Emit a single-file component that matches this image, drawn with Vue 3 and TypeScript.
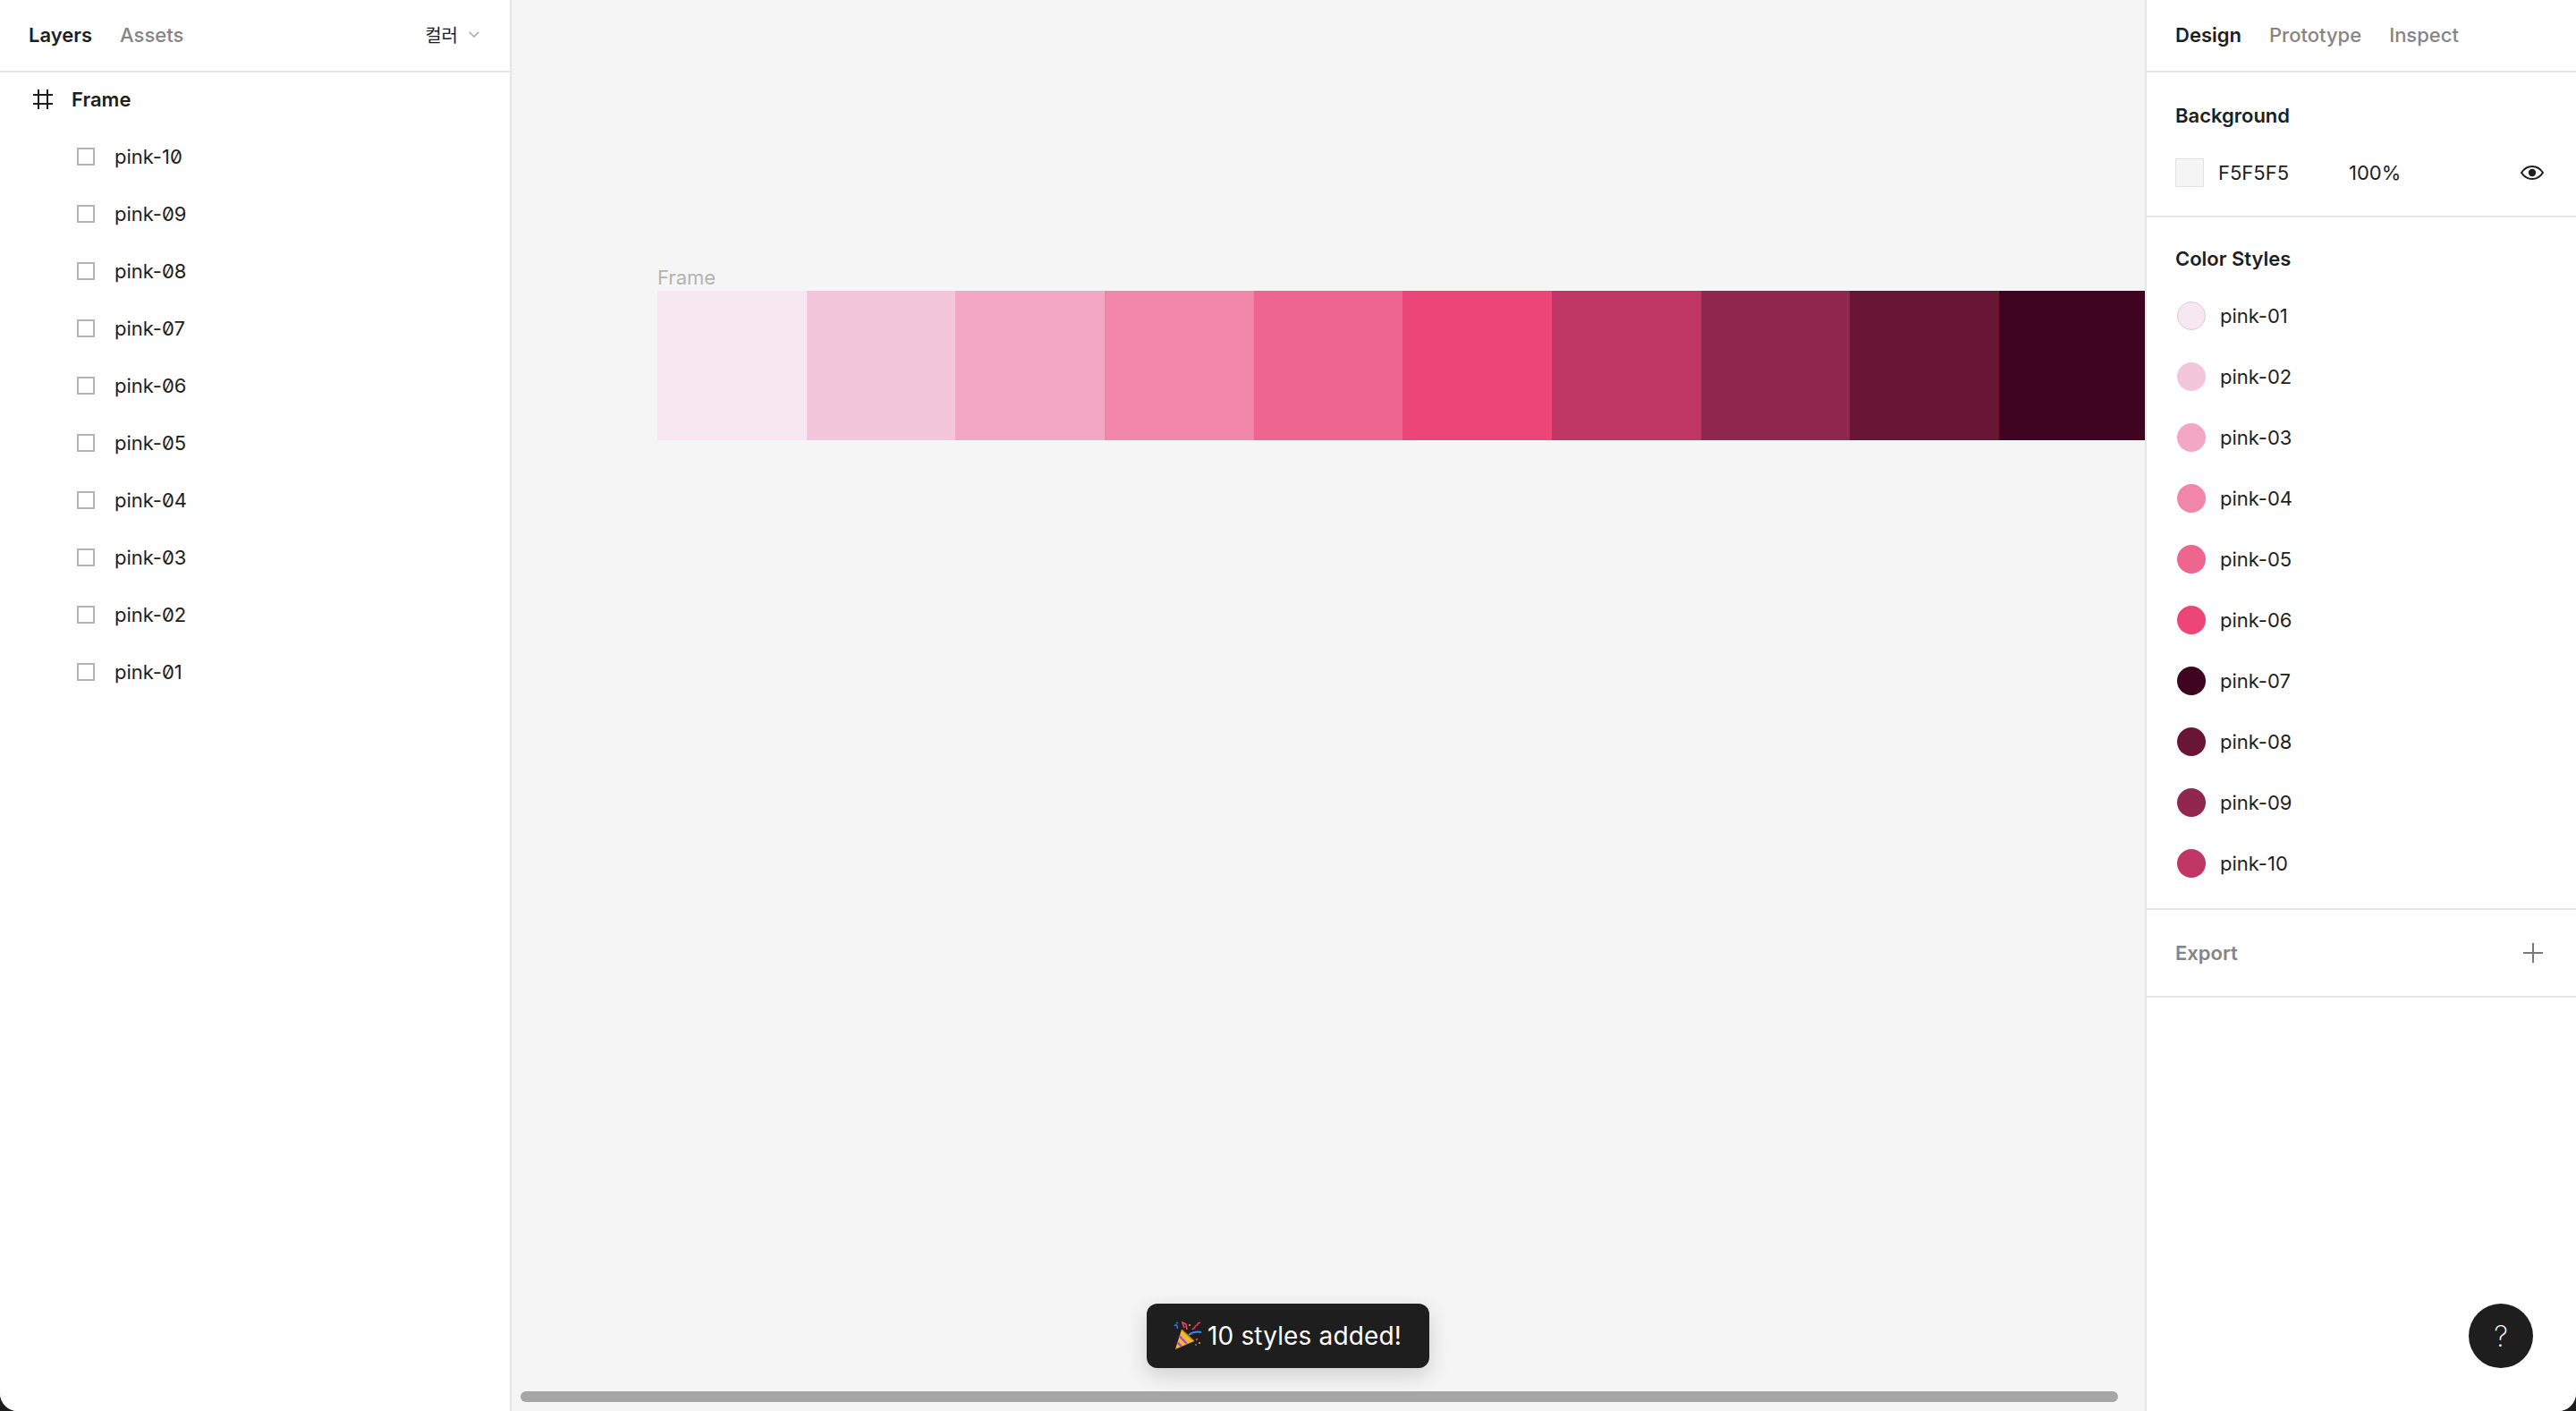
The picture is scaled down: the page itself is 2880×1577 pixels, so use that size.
<script setup lang="ts">
const layers: string[] = ['pink-10','pink-09','pink-08','pink-07','pink-06','pink-05','pink-04','pink-03','pink-02','pink-01']
const swatches: string[] = ['#F6E7F0','#F4C6DB','#F3A7C3','#F186AA','#EE668F','#EC4678','#BF3665','#91264F','#691534','#3F041F']
const styles = [
  { name: 'pink-01', color: '#F6E7F0', edge: true },
  { name: 'pink-02', color: '#F4C6DB', edge: false },
  { name: 'pink-03', color: '#F3A7C3', edge: false },
  { name: 'pink-04', color: '#F186AA', edge: false },
  { name: 'pink-05', color: '#EE668F', edge: false },
  { name: 'pink-06', color: '#EC4678', edge: false },
  { name: 'pink-07', color: '#3F041F', edge: false },
  { name: 'pink-08', color: '#691534', edge: false },
  { name: 'pink-09', color: '#91264F', edge: false },
  { name: 'pink-10', color: '#BF3665', edge: false },
]
</script>

<template>
  <div class="app">
    <aside class="left">
      <header class="tabs">
        <span class="tab on">Layers</span>
        <span class="tab">Assets</span>
        <span class="page">컬러
          <svg class="chev" width="12" height="7" viewBox="0 0 12 7"><path d="M.7.7L6 6l5.300-5.300" fill="none" stroke="#a8a8a8" stroke-width="1.500"/></svg>
        </span>
      </header>
      <div class="frame-row">
        <svg class="hash" width="24" height="24" viewBox="0 0 24 24"><path d="M1 7h22M1 17h22M7 1v22M17 1v22" fill="none" stroke="#1e1e1e" stroke-width="2"/></svg>
        <span>Frame</span>
      </div>
      <div v-for="l in layers" :key="l" class="layer">
        <span class="sq"></span>
        <span class="lname">{{ l }}</span>
      </div>
    </aside>

    <main class="canvas">
      <div class="flabel">Frame</div>
      <div class="strip">
        <div v-for="c in swatches" :key="c" class="sw" :style="{ background: c }"></div>
      </div>
      <div class="scroll"></div>
    </main>

    <aside class="right">
      <header class="tabs rtabs">
        <span class="tab on">Design</span>
        <span class="tab">Prototype</span>
        <span class="tab">Inspect</span>
      </header>
      <section class="bg">
        <h3>Background</h3>
        <div class="bgrow">
          <span class="box"></span>
          <span class="hex">F5F5F5</span>
          <span class="pct">100%</span>
          <svg class="eye" width="28" height="18" viewBox="0 0 28 18"><path d="M2 9c3-4.600 7-7 12-7s9 2.400 12 7c-3 4.600-7 7-12 7S5 13.600 2 9z" fill="none" stroke="#1e1e1e" stroke-width="2"/><circle cx="14" cy="9" r="4.200" fill="#1e1e1e"/></svg>
        </div>
      </section>
      <section class="cs">
        <h3>Color Styles</h3>
        <div v-for="s in styles" :key="s.name" class="style">
          <span class="dot" :class="{ edge: s.edge }" :style="{ background: s.color }"></span>
          <span>{{ s.name }}</span>
        </div>
      </section>
      <section class="export">
        <span>Export</span>
        <svg class="plus" width="24" height="24" viewBox="0 0 24 24"><path d="M1 12h22M12 1v22" fill="none" stroke="#7a7a7a" stroke-width="2"/></svg>
      </section>
      <div class="help">?</div>
    </aside>

    <div class="toast">
      <svg class="party" width="32" height="32" viewBox="0 0 32 32">
        <path d="M9 9 L23 22 L2 31 Z" fill="#F4B72E"/>
        <path d="M6.500 16 L15 25" stroke="#A04FD0" stroke-width="2.400"/>
        <path d="M4.200 23 L9 28" stroke="#A04FD0" stroke-width="2.400"/>
        <path d="M9 9 L23 22" stroke="#C9861C" stroke-width="1.500"/>
        <path d="M1 5c2-3 4 0 3 3M3 1l2 1" fill="none" stroke="#2B6FD6" stroke-width="1.800"/>
        <path d="M12 7l-2-6 4 2 1 6" fill="none" stroke="#E0405A" stroke-width="1.800"/>
        <path d="M21 9c1-2 3-1 3-3s3-1 3-3 2-1 3-2" fill="none" stroke="#D8336B" stroke-width="1.800"/>
        <path d="M17 15c4-3 9-4 14-3" fill="none" stroke="#3D8BDD" stroke-width="2"/>
        <circle cx="26" cy="20" r="1.200" fill="#E0405A"/><circle cx="29" cy="24" r="1" fill="#F4B72E"/><circle cx="25" cy="26" r="1" fill="#3D8BDD"/>
        <circle cx="18" cy="4" r="1" fill="#F4B72E"/>
      </svg>
      <span>10 styles added!</span>
    </div>
  </div>
</template>

<style>
html, body { margin: 0; background: #1e1e1e; }
</style>

<style scoped>
.app {
  position: relative;
  display: flex;
  width: 2880px;
  height: 1577px;
  overflow: hidden;
  border-radius: 0 0 20px 20px;
  background: #f5f5f5;
  font-family: Inter, "Noto Sans CJK KR", sans-serif;
  color: #1e1e1e;
  font-size: 24px;
}
.left {
  width: 570px;
  flex: none;
  background: #fff;
  border-right: 2px solid #e6e6e6;
}
.right {
  position: relative;
  width: 480px;
  flex: none;
  background: #fff;
  border-left: 2px solid #e6e6e6;
}
.tabs {
  height: 77px;
  box-sizing: content-box;
  display: flex;
  align-items: center;
  gap: 31px;
  padding: 0 32px 2px;
  border-bottom: 2px solid #e6e6e6;
  font-size: 22px;
}
.tab { color: #858585; font-weight: 500; }
.tab.on { color: #1e1e1e; font-weight: 600; }
.page {
  margin-left: auto;
  display: flex;
  align-items: center;
  gap: 12px;
  padding-right: 2px;
  font-size: 20px;
}
.frame-row {
  height: 60px;
  padding-bottom: 2px;
  display: flex;
  align-items: center;
  padding-left: 36px;
  gap: 20px;
  font-size: 22px;
  font-weight: 600;
}
.layer {
  height: 64px;
  display: flex;
  align-items: center;
  padding-left: 86px;
  gap: 22px;
  font-size: 22px;
}
.sq {
  width: 16px;
  height: 16px;
  border: 2px solid #b3b3b3;
  flex: none;
}
.lname { font-feature-settings: "zero"; }
.canvas {
  position: relative;
  flex: 1;
  min-width: 0;
  overflow: hidden;
  padding: 295px 0 0 163px;
}
.flabel {
  height: 30px;
  line-height: 30px;
  font-size: 22px;
  color: #b3b3b3;
}
.strip { display: flex; height: 167px; }
.sw { width: 166.670px; flex: none; }
.scroll {
  position: absolute;
  left: 10px;
  width: 1786px;
  bottom: 10px;
  height: 12px;
  border-radius: 6px;
  background: #a6a6a6;
}
h3 {
  margin: 0;
  font-size: 22px;
  font-weight: 600;
  line-height: 28px;
}
.bg {
  height: 162px;
  padding: 34px 32px 0;
  box-sizing: border-box;
  border-bottom: 2px solid #e6e6e6;
}
.bgrow {
  margin-top: 34px;
  height: 32px;
  display: flex;
  align-items: center;
  font-size: 22px;
}
.box {
  width: 30px;
  height: 30px;
  border: 1px solid #e0e0e0;
  background: #f5f5f5;
  border-radius: 1px;
  flex: none;
}
.hex { margin-left: 16px; width: 146px; }
.eye { margin-left: auto; margin-right: 3px; }
.cs {
  height: 774px;
  box-sizing: border-box;
  padding: 32px 32px 0;
  border-bottom: 2px solid #e6e6e6;
}
.style {
  height: 68px;
  display: flex;
  align-items: center;
  gap: 16px;
  font-size: 22px;
  padding-left: 2px;
}
.cs h3 { margin-bottom: 16px; }
.dot {
  width: 32px;
  height: 32px;
  border-radius: 50%;
  box-sizing: border-box;
  flex: none;
}
.dot.edge { border: 1px solid #e3c9d7; }
.export {
  height: 98px;
  box-sizing: border-box;
  padding: 0 32px;
  display: flex;
  align-items: center;
  justify-content: space-between;
  border-bottom: 2px solid #e6e6e6;
  font-size: 22px;
  font-weight: 600;
  color: #858585;
}
.plus { margin-right: 4px; }
.help {
  position: absolute;
  right: 48px;
  bottom: 48px;
  width: 72px;
  height: 72px;
  border-radius: 50%;
  background: #1e1e1e;
  color: #fff;
  display: flex;
  align-items: center;
  justify-content: center;
  font-size: 32px;
  font-weight: 200;
}
.toast {
  position: absolute;
  left: 50%;
  bottom: 48px;
  transform: translateX(-50%);
  width: 316px;
  height: 72px;
  box-sizing: border-box;
  padding-left: 30px;
  display: flex;
  align-items: center;
  gap: 6px;
  background: #1e1e1e;
  color: #fff;
  border-radius: 12px;
  font-size: 28px;
  letter-spacing: .15px;
  box-shadow: 0 8px 24px rgba(0,0,0,.16);
}
.party { flex: none; }
</style>
